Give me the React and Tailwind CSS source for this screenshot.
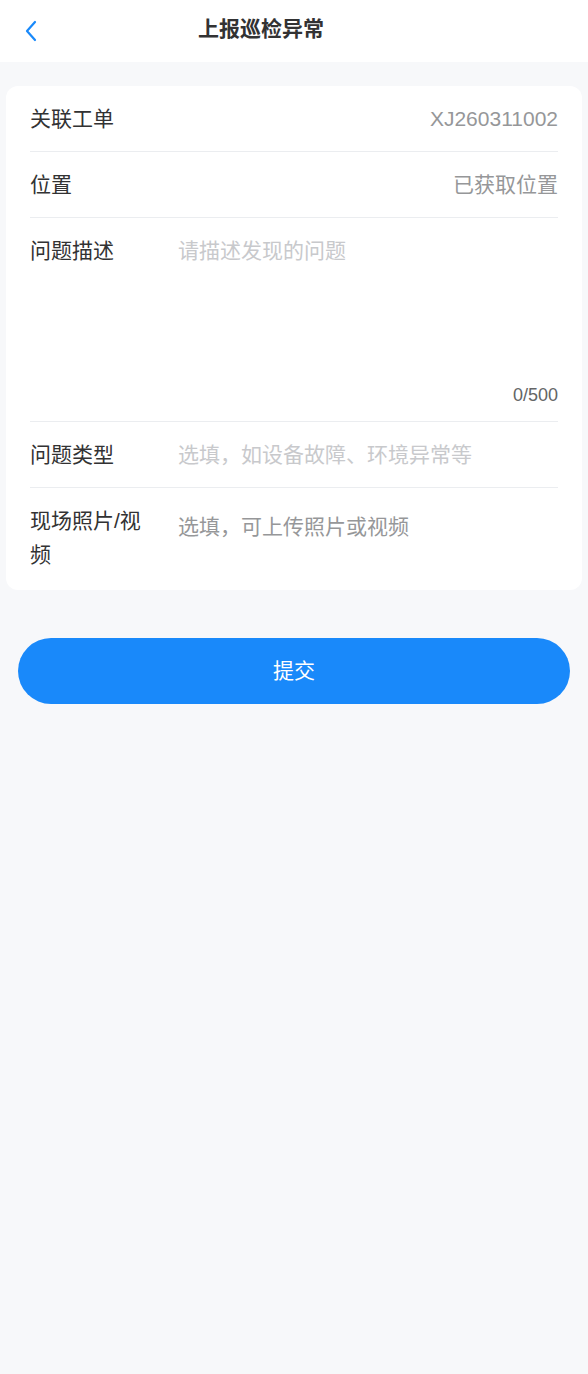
import React, { useState } from 'react';

const Row = ({ label, children, last }) => (
    <div className={`flex pt-4 ${last ? 'pb-[18px]' : 'pb-[15px] border-b border-[#ebedf0]'}`}>
        <div className="w-[126px] mr-[22px] shrink-0 text-[#323233] leading-[34px]">{label}</div>
        <div className="flex-1 min-w-0">{children}</div>
    </div>
);

const App = () => {
    const [desc, setDesc] = useState('');
    const [type, setType] = useState('');

    return (
        <div
            className="min-h-[1374px] bg-[#f7f8fa] text-[21px]"
            style={{ fontFamily: '"Liberation Sans", "Noto Sans CJK SC", sans-serif' }}
        >
            {/* nav bar */}
            <div className="h-[62px] bg-white flex items-center">
                <button className="w-[66px] h-full flex items-center pl-[24px] shrink-0">
                    <svg width="14" height="22" viewBox="0 0 14 22" fill="none">
                        <path d="M11 2L3 11l8 9" stroke="#1989fa" strokeWidth="2.2" strokeLinecap="round" strokeLinejoin="round" />
                    </svg>
                </button>
                <div className="flex-1 mr-[132px] text-center font-bold text-[#323233] leading-[34px] -mt-1">上报巡检异常</div>
            </div>

            <div className="px-[6px] pt-6">
                <div className="bg-white rounded-[12px] px-6">
                    <Row label="关联工单">
                        <div className="text-right text-[#969799] leading-[34px]">XJ260311002</div>
                    </Row>
                    <Row label="位置">
                        <div className="text-right text-[#969799] leading-[34px]">已获取位置</div>
                    </Row>
                    <Row label="问题描述">
                        <textarea
                            value={desc}
                            onChange={(e) => setDesc(e.target.value.slice(0, 500))}
                            placeholder="请描述发现的问题"
                            className="block w-full h-[150px] resize-none outline-none leading-[34px] text-[#323233] placeholder:text-[#c8c9cc] bg-transparent"
                        />
                        <div className="text-right text-[18px] leading-[22px] text-[#646566]">{desc.length}/500</div>
                    </Row>
                    <Row label="问题类型">
                        <input
                            value={type}
                            onChange={(e) => setType(e.target.value)}
                            placeholder="选填，如设备故障、环境异常等"
                            className="block w-full h-[34px] outline-none text-[#323233] placeholder:text-[#c8c9cc] bg-transparent"
                        />
                    </Row>
                    <Row label="现场照片/视频" last>
                        <div className="text-[#969799] leading-[34px] mt-[6px]">选填，可上传照片或视频</div>
                    </Row>
                </div>
            </div>

            <div className="px-[18px] pt-12">
                <button className="w-full h-[66px] rounded-full bg-[#1989fa] text-white text-[21px]">提交</button>
            </div>
        </div>
    );
};

export default App;
